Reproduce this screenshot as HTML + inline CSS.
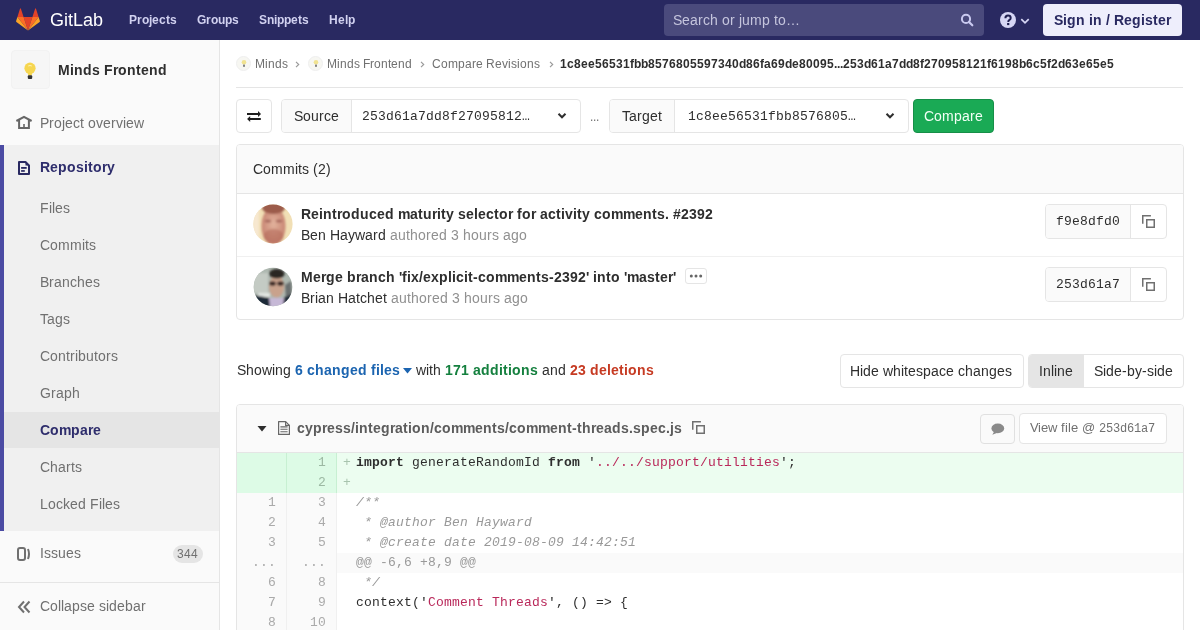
<!DOCTYPE html>
<html><head><meta charset="utf-8">
<style>
*{box-sizing:border-box;margin:0;padding:0}
html,body{width:1200px;height:630px;overflow:hidden;background:#fff;font-family:"Liberation Sans",sans-serif;font-size:14px;color:#2e2e2e}
.abs{position:absolute}
.t{position:absolute;white-space:nowrap;line-height:1;will-change:transform}
c{display:inline-block}
.w3{width:3px}.w4{width:4px}.w5{width:5px}.w6{width:6px}.w7{width:7px}.w8{width:8px}.w9{width:9px}.w10{width:10px}.w11{width:11px}.w12{width:12px}.w13{width:13px}.w14{width:14px}
</style></head><body>
<div class="abs" style="left:0px;top:0px;width:1200px;height:40px;background:#292961"></div>
<svg class="abs" style="left:16px;top:8px" width="24" height="24" viewBox="0 0 24 24">
<path d="M12 22.5 L16.4 9 H7.6 Z" fill="#e24329"/>
<path d="M12 22.5 L7.6 9 H1.4 Z" fill="#fc6d26"/>
<path d="M1.4 9 L0.1 13 a0.9 .9 0 0 0 .3 1 L12 22.5 Z" fill="#fca326"/>
<path d="M1.4 9 H7.6 L4.9 .8 a.45 .45 0 0 0 -.9 0 Z" fill="#e24329"/>
<path d="M12 22.5 L16.4 9 H22.6 Z" fill="#fc6d26"/>
<path d="M22.6 9 L23.9 13 a.9 .9 0 0 1 -.3 1 L12 22.5 Z" fill="#fca326"/>
<path d="M22.6 9 H16.4 L19.1 .8 a.45 .45 0 0 1 .9 0 Z" fill="#e24329"/>
</svg>
<div class="t" style="left:49.5px;top:10.76px;font-size:18px;color:#fff;"><c class="w14">G</c><c class="w4">i</c><c class="w5">t</c><c class="w10">L</c><c class="w10">a</c><c class="w10">b</c></div>
<div class="t" style="left:129px;top:14.14px;font-size:12px;color:#d1d1f0;font-weight:bold;"><c class="w8">P</c><c class="w5">r</c><c class="w7">o</c><c class="w3">j</c><c class="w7">e</c><c class="w7">c</c><c class="w4">t</c><c class="w7">s</c></div>
<div class="t" style="left:197px;top:14.14px;font-size:12px;color:#d1d1f0;font-weight:bold;"><c class="w9">G</c><c class="w5">r</c><c class="w7">o</c><c class="w7">u</c><c class="w7">p</c><c class="w7">s</c></div>
<div class="t" style="left:259px;top:14.14px;font-size:12px;color:#d1d1f0;font-weight:bold;"><c class="w8">S</c><c class="w7">n</c><c class="w3">i</c><c class="w7">p</c><c class="w7">p</c><c class="w7">e</c><c class="w4">t</c><c class="w7">s</c></div>
<div class="t" style="left:329px;top:14.14px;font-size:12px;color:#d1d1f0;font-weight:bold;"><c class="w9">H</c><c class="w7">e</c><c class="w3">l</c><c class="w7">p</c></div>
<div class="abs" style="left:664px;top:4px;width:320px;height:32px;background:#4a4a7c;border-radius:4px"></div>
<div class="t" style="left:673.3px;top:13.15px;font-size:14px;color:#c5c5dd;"><c class="w9">S</c><c class="w8">e</c><c class="w8">a</c><c class="w5">r</c><c class="w7">c</c><c class="w8">h</c><c class="w4">&nbsp;</c><c class="w8">o</c><c class="w5">r</c><c class="w4">&nbsp;</c><c class="w3">j</c><c class="w8">u</c><c class="w12">m</c><c class="w8">p</c><c class="w4">&nbsp;</c><c class="w4">t</c><c class="w8">o</c><c class="w14">…</c></div>
<svg class="abs" style="left:958px;top:11px" width="18" height="18" viewBox="0 0 18 18"><circle cx="8" cy="7.9" r="4.1" fill="none" stroke="#cacaf0" stroke-width="2"/><path d="M11 11 L14.3 14.3" stroke="#cacaf0" stroke-width="2.2" stroke-linecap="round"/></svg>
<svg class="abs" style="left:1000px;top:12px;will-change:transform" width="16" height="16" viewBox="0 0 16 16"><circle cx="8" cy="8" r="8" fill="#d6d6f5"/><path d="M5.4 6.3 Q5.4 3.6 8 3.6 Q10.7 3.6 10.7 6 Q10.7 7.4 9.2 8.1 Q8.3 8.6 8.3 9.9" fill="none" stroke="#1f1f50" stroke-width="2"/><rect x="7.1" y="11" width="2.2" height="2.1" fill="#1f1f50"/></svg>
<svg class="abs" style="left:1020px;top:16.5px" width="10" height="8" viewBox="0 0 10 8"><path d="M1.3 2.2 L5 5.9 L8.7 2.2" fill="none" stroke="#d6d6f5" stroke-width="1.7"/></svg>
<div class="abs" style="left:1043px;top:4px;width:139px;height:32px;background:#eeeefc;border-radius:4px"></div>
<div class="t" style="left:1054px;top:13.15px;font-size:14px;color:#292961;font-weight:bold;"><c class="w9">S</c><c class="w4">i</c><c class="w9">g</c><c class="w9">n</c><c class="w4">&nbsp;</c><c class="w4">i</c><c class="w9">n</c><c class="w4">&nbsp;</c><c class="w4">/</c><c class="w4">&nbsp;</c><c class="w10">R</c><c class="w8">e</c><c class="w9">g</c><c class="w4">i</c><c class="w8">s</c><c class="w5">t</c><c class="w8">e</c><c class="w5">r</c></div>
<div class="abs" style="left:0px;top:40px;width:220px;height:590px;background:#fafafa;border-right:1px solid #e5e5e5"></div>
<div class="abs" style="left:11px;top:50px;width:39px;height:39px;background:#f6f6f6;border:1px solid #f2f2f2;border-radius:4px"></div>
<svg class="abs" style="left:23px;top:62px" width="14" height="19" viewBox="0 0 14 19"><circle cx="7" cy="6.2" r="5.6" fill="#f6d650"/><path d="M3.8 9.5 Q5.2 11.5 5.2 13.5 H8.8 Q8.8 11.5 10.2 9.5 Z" fill="#f6d650"/><rect x="4.8" y="13.2" width="4.4" height="3.8" rx="1" fill="#333"/><path d="M5.2 4 Q7 3 8.8 4" stroke="#fff3b0" stroke-width="1" fill="none"/></svg>
<div class="t" style="left:58px;top:63.45px;font-size:14px;color:#2e2e2e;font-weight:bold;"><c class="w12">M</c><c class="w4">i</c><c class="w9">n</c><c class="w9">d</c><c class="w8">s</c><c class="w4">&nbsp;</c><c class="w9">F</c><c class="w5">r</c><c class="w9">o</c><c class="w9">n</c><c class="w5">t</c><c class="w8">e</c><c class="w9">n</c><c class="w9">d</c></div>
<svg class="abs" style="left:12px;top:110px" width="24" height="24" viewBox="0 0 24 24"><path d="M4.4 11 L12 6.9 L19.6 11" fill="none" stroke="#666" stroke-width="2"/><path d="M7.1 9.6 V17.9 H16.9 V9.6" fill="none" stroke="#666" stroke-width="2"/><rect x="11.2" y="14" width="1.6" height="4" fill="#666"/></svg>
<div class="t" style="left:40px;top:115.75px;font-size:14px;color:#707070;"><c class="w9">P</c><c class="w5">r</c><c class="w8">o</c><c class="w3">j</c><c class="w8">e</c><c class="w7">c</c><c class="w4">t</c><c class="w4">&nbsp;</c><c class="w8">o</c><c class="w7">v</c><c class="w8">e</c><c class="w5">r</c><c class="w7">v</c><c class="w3">i</c><c class="w8">e</c><c class="w10">w</c></div>
<div class="abs" style="left:0px;top:145px;width:219px;height:386px;background:#f0f0f0"></div>
<div class="abs" style="left:0px;top:145px;width:4px;height:386px;background:#4b4ba3"></div>
<svg class="abs" style="left:18px;top:161px" width="12" height="14" viewBox="0 0 12 14"><path d="M1 1 H7.5 L11 4.5 V13 H1 Z" fill="none" stroke="#292961" stroke-width="2" stroke-linejoin="round"/><path d="M7.5 1 L11 4.5 H7.5 Z" fill="#292961"/><rect x="3.1" y="6" width="5.6" height="1.8" fill="#292961"/><rect x="3.1" y="9.1" width="3.7" height="1.7" fill="#292961"/></svg>
<div class="t" style="left:40px;top:160.15px;font-size:14px;color:#2e2d6c;font-weight:bold;"><c class="w10">R</c><c class="w8">e</c><c class="w9">p</c><c class="w9">o</c><c class="w8">s</c><c class="w4">i</c><c class="w5">t</c><c class="w9">o</c><c class="w5">r</c><c class="w8">y</c></div>
<div class="t" style="left:40px;top:201.15px;font-size:14px;color:#707070;"><c class="w9">F</c><c class="w3">i</c><c class="w3">l</c><c class="w8">e</c><c class="w7">s</c></div>
<div class="t" style="left:40px;top:238.15px;font-size:14px;color:#707070;"><c class="w10">C</c><c class="w8">o</c><c class="w12">m</c><c class="w12">m</c><c class="w3">i</c><c class="w4">t</c><c class="w7">s</c></div>
<div class="t" style="left:40px;top:275.15px;font-size:14px;color:#707070;"><c class="w9">B</c><c class="w5">r</c><c class="w8">a</c><c class="w8">n</c><c class="w7">c</c><c class="w8">h</c><c class="w8">e</c><c class="w7">s</c></div>
<div class="t" style="left:40px;top:312.15px;font-size:14px;color:#707070;"><c class="w7">T</c><c class="w8">a</c><c class="w8">g</c><c class="w7">s</c></div>
<div class="t" style="left:40px;top:349.15px;font-size:14px;color:#707070;"><c class="w10">C</c><c class="w8">o</c><c class="w8">n</c><c class="w4">t</c><c class="w5">r</c><c class="w3">i</c><c class="w8">b</c><c class="w8">u</c><c class="w4">t</c><c class="w8">o</c><c class="w5">r</c><c class="w7">s</c></div>
<div class="t" style="left:40px;top:386.15px;font-size:14px;color:#707070;"><c class="w11">G</c><c class="w5">r</c><c class="w8">a</c><c class="w8">p</c><c class="w8">h</c></div>
<div class="abs" style="left:4px;top:412px;width:215px;height:36px;background:#e5e5e5"></div>
<div class="t" style="left:40px;top:423.15px;font-size:14px;color:#2e2d6c;font-weight:bold;"><c class="w10">C</c><c class="w9">o</c><c class="w12">m</c><c class="w9">p</c><c class="w8">a</c><c class="w5">r</c><c class="w8">e</c></div>
<div class="t" style="left:40px;top:460.15px;font-size:14px;color:#707070;"><c class="w10">C</c><c class="w8">h</c><c class="w8">a</c><c class="w5">r</c><c class="w4">t</c><c class="w7">s</c></div>
<div class="t" style="left:40px;top:497.15px;font-size:14px;color:#707070;"><c class="w8">L</c><c class="w8">o</c><c class="w7">c</c><c class="w7">k</c><c class="w8">e</c><c class="w8">d</c><c class="w4">&nbsp;</c><c class="w9">F</c><c class="w3">i</c><c class="w3">l</c><c class="w8">e</c><c class="w7">s</c></div>
<svg class="abs" style="left:17px;top:547px" width="14" height="14" viewBox="0 0 14 14"><rect x="1" y="1" width="7" height="12" rx="2" fill="none" stroke="#707070" stroke-width="2"/><path d="M11 2 Q13 7 11 12" fill="none" stroke="#707070" stroke-width="2"/></svg>
<div class="t" style="left:40px;top:545.75px;font-size:14px;color:#707070;"><c class="w4">I</c><c class="w7">s</c><c class="w7">s</c><c class="w8">u</c><c class="w8">e</c><c class="w7">s</c></div>
<div class="abs" style="left:172.5px;top:545px;width:30px;height:18px;background:#e5e5e5;border-radius:9px"></div>
<div class="t" style="left:177px;top:547.64px;font-size:12px;color:#707070;"><c class="w7">3</c><c class="w7">4</c><c class="w7">4</c></div>
<div class="abs" style="left:0px;top:582px;width:219px;height:1px;background:#e5e5e5"></div>
<svg class="abs" style="left:17px;top:600px" width="14" height="14" viewBox="0 0 14 14"><path d="M7 1.5 L2 7 L7 12.5 M12.5 1.5 L7.5 7 L12.5 12.5" fill="none" stroke="#707070" stroke-width="2"/></svg>
<div class="t" style="left:40px;top:598.95px;font-size:14px;color:#707070;"><c class="w10">C</c><c class="w8">o</c><c class="w3">l</c><c class="w3">l</c><c class="w8">a</c><c class="w8">p</c><c class="w7">s</c><c class="w8">e</c><c class="w4">&nbsp;</c><c class="w7">s</c><c class="w3">i</c><c class="w8">d</c><c class="w8">e</c><c class="w8">b</c><c class="w8">a</c><c class="w5">r</c></div>
<div class="abs" style="left:236px;top:56px;width:15px;height:15px;background:#f7f7f2;border-radius:50%;border:1px solid #efefef"></div>
<svg class="abs" style="left:241px;top:59px" width="6" height="9" viewBox="0 0 6 9"><circle cx="3" cy="3.2" r="2.3" fill="#f1e390"/><rect x="2.1" y="5.6" width="1.8" height="2.2" fill="#777"/></svg>
<div class="t" style="left:255.3px;top:57.64px;font-size:12px;color:#707070;"><c class="w10">M</c><c class="w3">i</c><c class="w7">n</c><c class="w7">d</c><c class="w6">s</c></div>
<svg class="abs" style="left:295px;top:61px" width="6" height="7" viewBox="0 0 6 7"><path d="M1 0.9 L3.7 3.5 L1 6.1" fill="none" stroke="#999" stroke-width="1.15"/></svg>
<div class="abs" style="left:308px;top:56px;width:15px;height:15px;background:#f7f7f2;border-radius:50%;border:1px solid #efefef"></div>
<svg class="abs" style="left:313px;top:59px" width="6" height="9" viewBox="0 0 6 9"><circle cx="3" cy="3.2" r="2.3" fill="#f1e390"/><rect x="2.1" y="5.6" width="1.8" height="2.2" fill="#777"/></svg>
<div class="t" style="left:326.6px;top:57.64px;font-size:12px;color:#707070;"><c class="w10">M</c><c class="w3">i</c><c class="w7">n</c><c class="w7">d</c><c class="w6">s</c><c class="w3">&nbsp;</c><c class="w7">F</c><c class="w4">r</c><c class="w7">o</c><c class="w7">n</c><c class="w3">t</c><c class="w7">e</c><c class="w7">n</c><c class="w7">d</c></div>
<svg class="abs" style="left:420px;top:61px" width="6" height="7" viewBox="0 0 6 7"><path d="M1 0.9 L3.7 3.5 L1 6.1" fill="none" stroke="#999" stroke-width="1.15"/></svg>
<div class="t" style="left:432.3px;top:57.64px;font-size:12px;color:#707070;"><c class="w9">C</c><c class="w7">o</c><c class="w10">m</c><c class="w7">p</c><c class="w7">a</c><c class="w4">r</c><c class="w7">e</c><c class="w3">&nbsp;</c><c class="w9">R</c><c class="w7">e</c><c class="w6">v</c><c class="w3">i</c><c class="w6">s</c><c class="w3">i</c><c class="w7">o</c><c class="w7">n</c><c class="w6">s</c></div>
<svg class="abs" style="left:549px;top:61px" width="6" height="7" viewBox="0 0 6 7"><path d="M1 0.9 L3.7 3.5 L1 6.1" fill="none" stroke="#999" stroke-width="1.15"/></svg>
<div class="t" style="left:560px;top:57.64px;font-size:12px;color:#2e2e2e;font-weight:bold;"><c class="w7">1</c><c class="w7">c</c><c class="w7">8</c><c class="w7">e</c><c class="w7">e</c><c class="w7">5</c><c class="w7">6</c><c class="w7">5</c><c class="w7">3</c><c class="w7">1</c><c class="w4">f</c><c class="w7">b</c><c class="w7">b</c><c class="w7">8</c><c class="w7">5</c><c class="w7">7</c><c class="w7">6</c><c class="w7">8</c><c class="w7">0</c><c class="w7">5</c><c class="w7">5</c><c class="w7">9</c><c class="w7">7</c><c class="w7">3</c><c class="w7">4</c><c class="w7">0</c><c class="w7">d</c><c class="w7">8</c><c class="w7">6</c><c class="w4">f</c><c class="w7">a</c><c class="w7">6</c><c class="w7">9</c><c class="w7">d</c><c class="w7">e</c><c class="w7">8</c><c class="w7">0</c><c class="w7">0</c><c class="w7">9</c><c class="w7">5</c><c class="w3">.</c><c class="w3">.</c><c class="w3">.</c><c class="w7">2</c><c class="w7">5</c><c class="w7">3</c><c class="w7">d</c><c class="w7">6</c><c class="w7">1</c><c class="w7">a</c><c class="w7">7</c><c class="w7">d</c><c class="w7">d</c><c class="w7">8</c><c class="w4">f</c><c class="w7">2</c><c class="w7">7</c><c class="w7">0</c><c class="w7">9</c><c class="w7">5</c><c class="w7">8</c><c class="w7">1</c><c class="w7">2</c><c class="w7">1</c><c class="w4">f</c><c class="w7">6</c><c class="w7">1</c><c class="w7">9</c><c class="w7">8</c><c class="w7">b</c><c class="w7">6</c><c class="w7">c</c><c class="w7">5</c><c class="w4">f</c><c class="w7">2</c><c class="w7">d</c><c class="w7">6</c><c class="w7">3</c><c class="w7">e</c><c class="w7">6</c><c class="w7">5</c><c class="w7">e</c><c class="w7">5</c></div>
<div class="abs" style="left:236px;top:87px;width:947px;height:1px;background:#e5e5e5"></div>
<div class="abs" style="left:236px;top:99px;width:36px;height:34px;background:#fff;border:1px solid #e5e5e5;border-radius:4px"></div>
<svg class="abs" style="left:240px;top:104px" width="28" height="24" viewBox="0 0 28 24"><rect x="7" y="9" width="11.5" height="2" fill="#1e1e1e"/><path d="M18 7 L21 10 L18 13 Z" fill="#1e1e1e"/><rect x="9.8" y="14" width="11" height="2" fill="#1e1e1e"/><path d="M10.2 12 L7.1 15 L10.2 18 Z" fill="#1e1e1e"/></svg>
<div class="abs" style="left:281px;top:99px;width:300px;height:34px;background:#fff;border:1px solid #e5e5e5;border-radius:4px"></div>
<div class="abs" style="left:282px;top:100px;width:70px;height:32px;background:#fafafa;border-right:1px solid #e5e5e5;border-radius:3px 0 0 3px"></div>
<div class="t" style="left:293.9px;top:109.15px;font-size:14px;color:#2e2e2e;"><c class="w9">S</c><c class="w8">o</c><c class="w8">u</c><c class="w5">r</c><c class="w7">c</c><c class="w8">e</c></div>
<div class="t" style="left:362.3px;top:110.44px;font-size:13px;color:#2e2e2e;font-family:'Liberation Mono',monospace;"><c class="w8">2</c><c class="w8">5</c><c class="w8">3</c><c class="w8">d</c><c class="w8">6</c><c class="w8">1</c><c class="w8">a</c><c class="w8">7</c><c class="w8">d</c><c class="w8">d</c><c class="w8">8</c><c class="w8">f</c><c class="w8">2</c><c class="w8">7</c><c class="w8">0</c><c class="w8">9</c><c class="w8">5</c><c class="w8">8</c><c class="w8">1</c><c class="w8">2</c><c class="w8">…</c></div>
<svg class="abs" style="left:557px;top:112px" width="10" height="8" viewBox="0 0 10 8"><path d="M1.5 1.8 L5 5.3 L8.5 1.8" fill="none" stroke="#2e2e2e" stroke-width="2"/></svg>
<div class="t" style="left:589.5px;top:110.84px;font-size:12px;color:#707070;"><c class="w3">.</c><c class="w3">.</c><c class="w3">.</c></div>
<div class="abs" style="left:609px;top:99px;width:300px;height:34px;background:#fff;border:1px solid #e5e5e5;border-radius:4px"></div>
<div class="abs" style="left:610px;top:100px;width:65px;height:32px;background:#fafafa;border-right:1px solid #e5e5e5;border-radius:3px 0 0 3px"></div>
<div class="t" style="left:621.5px;top:109.15px;font-size:14px;color:#2e2e2e;"><c class="w7">T</c><c class="w8">a</c><c class="w5">r</c><c class="w8">g</c><c class="w8">e</c><c class="w4">t</c></div>
<div class="t" style="left:688.2px;top:110.44px;font-size:13px;color:#2e2e2e;font-family:'Liberation Mono',monospace;"><c class="w8">1</c><c class="w8">c</c><c class="w8">8</c><c class="w8">e</c><c class="w8">e</c><c class="w8">5</c><c class="w8">6</c><c class="w8">5</c><c class="w8">3</c><c class="w8">1</c><c class="w8">f</c><c class="w8">b</c><c class="w8">b</c><c class="w8">8</c><c class="w8">5</c><c class="w8">7</c><c class="w8">6</c><c class="w8">8</c><c class="w8">0</c><c class="w8">5</c><c class="w8">…</c></div>
<svg class="abs" style="left:885px;top:112px" width="10" height="8" viewBox="0 0 10 8"><path d="M1.5 1.8 L5 5.3 L8.5 1.8" fill="none" stroke="#2e2e2e" stroke-width="2"/></svg>
<div class="abs" style="left:913px;top:99px;width:81px;height:34px;background:#1aaa55;border:1px solid #168f48;border-radius:4px"></div>
<div class="t" style="left:924.2px;top:109.15px;font-size:14px;color:#f2fff6;"><c class="w10">C</c><c class="w8">o</c><c class="w12">m</c><c class="w8">p</c><c class="w8">a</c><c class="w5">r</c><c class="w8">e</c></div>
<div class="abs" style="left:236px;top:144px;width:948px;height:176px;background:#fff;border:1px solid #e5e5e5;border-radius:4px"></div>
<div class="abs" style="left:237px;top:145px;width:946px;height:49px;background:#fafafa;border-bottom:1px solid #e5e5e5;border-radius:3px 3px 0 0"></div>
<div class="t" style="left:253.4px;top:162.45px;font-size:14px;color:#2e2e2e;"><c class="w10">C</c><c class="w8">o</c><c class="w12">m</c><c class="w12">m</c><c class="w3">i</c><c class="w4">t</c><c class="w7">s</c><c class="w4">&nbsp;</c><c class="w5">(</c><c class="w8">2</c><c class="w5">)</c></div>
<div class="abs" style="left:237px;top:256px;width:946px;height:1px;background:#f0f0f0"></div>
<svg class="abs" style="left:253px;top:204px" width="40" height="40" viewBox="0 0 40 40">
<defs><clipPath id="c1"><circle cx="20" cy="20" r="19.6"/></clipPath><filter id="bl1" x="-10%" y="-10%" width="120%" height="120%"><feGaussianBlur stdDeviation="1.1"/></filter>
<radialGradient id="fg1" cx="50%" cy="45%" r="55%"><stop offset="0" stop-color="#e2b29c"/><stop offset="1" stop-color="#c68270"/></radialGradient></defs>
<g clip-path="url(#c1)"><rect width="40" height="40" fill="#f1dfb5"/>
<g filter="url(#bl1)">
<rect x="0" y="0" width="6" height="40" fill="#f7e8d0"/>
<ellipse cx="20.5" cy="22" rx="12" ry="19" fill="url(#fg1)"/>
<ellipse cx="20.5" cy="4" rx="11.5" ry="6" fill="#9c5c4c"/>
<ellipse cx="15" cy="17" rx="3.2" ry="1.6" fill="#9a5a50" opacity=".75"/>
<ellipse cx="26" cy="17" rx="3.2" ry="1.6" fill="#9a5a50" opacity=".75"/>
<ellipse cx="20.5" cy="32" rx="10" ry="7" fill="#b06454" opacity=".5"/>
</g></g></svg>
<svg class="abs" style="left:253px;top:267px" width="40" height="40" viewBox="0 0 40 40">
<defs><clipPath id="c2"><circle cx="20" cy="20" r="19.3"/></clipPath><filter id="bl2" x="-10%" y="-10%" width="120%" height="120%"><feGaussianBlur stdDeviation="0.8"/></filter></defs>
<g clip-path="url(#c2)"><rect width="40" height="40" fill="#aeb8b0"/>
<g filter="url(#bl2)">
<rect x="0" y="6" width="15" height="20" fill="#c4cbc4"/>
<rect x="5" y="26" width="12" height="4" fill="#e2e6e2"/>
<path d="M32 18 L38 14 L39 30 L33 32 Z" fill="#6a7070"/>
<path d="M1 28 L17 31 L17 40 L1 40 Z" fill="#1f2a38"/>
<path d="M30 31 L39 27 L40 40 L30 40 Z" fill="#27313c"/>
<ellipse cx="23.5" cy="19.5" rx="7.6" ry="11" fill="#c9a28c"/>
<ellipse cx="23.8" cy="6.8" rx="7.8" ry="4.8" fill="#2a2624"/>
<ellipse cx="19.6" cy="16.6" rx="3.3" ry="2.3" fill="#3e2c28"/>
<ellipse cx="27.4" cy="16.6" rx="3.3" ry="2.3" fill="#3e2c28"/>
<path d="M16 31 L31 31 L30 40 L17 40 Z" fill="#c6b8d6"/>
</g></g></svg>
<div class="t" style="left:301.4px;top:206.85px;font-size:14px;color:#2e2e2e;font-weight:bold;"><c class="w10">R</c><c class="w8">e</c><c class="w4">i</c><c class="w9">n</c><c class="w5">t</c><c class="w5">r</c><c class="w9">o</c><c class="w9">d</c><c class="w9">u</c><c class="w8">c</c><c class="w8">e</c><c class="w9">d</c><c class="w4">&nbsp;</c><c class="w12">m</c><c class="w8">a</c><c class="w5">t</c><c class="w9">u</c><c class="w5">r</c><c class="w4">i</c><c class="w5">t</c><c class="w8">y</c><c class="w4">&nbsp;</c><c class="w8">s</c><c class="w8">e</c><c class="w4">l</c><c class="w8">e</c><c class="w8">c</c><c class="w5">t</c><c class="w9">o</c><c class="w5">r</c><c class="w4">&nbsp;</c><c class="w5">f</c><c class="w9">o</c><c class="w5">r</c><c class="w4">&nbsp;</c><c class="w8">a</c><c class="w8">c</c><c class="w5">t</c><c class="w4">i</c><c class="w8">v</c><c class="w4">i</c><c class="w5">t</c><c class="w8">y</c><c class="w4">&nbsp;</c><c class="w8">c</c><c class="w9">o</c><c class="w12">m</c><c class="w12">m</c><c class="w8">e</c><c class="w9">n</c><c class="w5">t</c><c class="w8">s</c><c class="w4">.</c><c class="w4">&nbsp;</c><c class="w8">#</c><c class="w8">2</c><c class="w8">3</c><c class="w8">9</c><c class="w8">2</c></div>
<div class="t" style="left:301.4px;top:228.15px;font-size:14px;color:#2e2e2e;"><c class="w9">B</c><c class="w8">e</c><c class="w8">n</c><c class="w4">&nbsp;</c><c class="w10">H</c><c class="w8">a</c><c class="w7">y</c><c class="w10">w</c><c class="w8">a</c><c class="w5">r</c><c class="w8">d</c><c class="w4">&nbsp;</c><span style="color:#909090;"><c class="w8">a</c><c class="w8">u</c><c class="w4">t</c><c class="w8">h</c><c class="w8">o</c><c class="w5">r</c><c class="w8">e</c><c class="w8">d</c><c class="w4">&nbsp;</c><c class="w8">3</c><c class="w4">&nbsp;</c><c class="w8">h</c><c class="w8">o</c><c class="w8">u</c><c class="w5">r</c><c class="w7">s</c><c class="w4">&nbsp;</c><c class="w8">a</c><c class="w8">g</c><c class="w8">o</c></span></div>
<div class="t" style="left:301.4px;top:269.85px;font-size:14px;color:#2e2e2e;font-weight:bold;"><c class="w12">M</c><c class="w8">e</c><c class="w5">r</c><c class="w9">g</c><c class="w8">e</c><c class="w4">&nbsp;</c><c class="w9">b</c><c class="w5">r</c><c class="w8">a</c><c class="w9">n</c><c class="w8">c</c><c class="w9">h</c><c class="w4">&nbsp;</c><c class="w3">&#x27;</c><c class="w5">f</c><c class="w4">i</c><c class="w8">x</c><c class="w4">/</c><c class="w8">e</c><c class="w8">x</c><c class="w9">p</c><c class="w4">l</c><c class="w4">i</c><c class="w8">c</c><c class="w4">i</c><c class="w5">t</c><c class="w5">-</c><c class="w8">c</c><c class="w9">o</c><c class="w12">m</c><c class="w12">m</c><c class="w8">e</c><c class="w9">n</c><c class="w5">t</c><c class="w8">s</c><c class="w5">-</c><c class="w8">2</c><c class="w8">3</c><c class="w8">9</c><c class="w8">2</c><c class="w3">&#x27;</c><c class="w4">&nbsp;</c><c class="w4">i</c><c class="w9">n</c><c class="w5">t</c><c class="w9">o</c><c class="w4">&nbsp;</c><c class="w3">&#x27;</c><c class="w12">m</c><c class="w8">a</c><c class="w8">s</c><c class="w5">t</c><c class="w8">e</c><c class="w5">r</c><c class="w3">&#x27;</c></div>
<div class="abs" style="left:685px;top:268px;width:22px;height:16px;background:#fff;border:1px solid #e5e5e5;border-radius:3px"></div>
<svg class="abs" style="left:689px;top:274px" width="14" height="4" viewBox="0 0 14 4"><circle cx="2.3" cy="2" r="1.5" fill="#666"/><circle cx="7" cy="2" r="1.5" fill="#666"/><circle cx="11.7" cy="2" r="1.5" fill="#666"/></svg>
<div class="t" style="left:301.4px;top:291.15px;font-size:14px;color:#2e2e2e;"><c class="w9">B</c><c class="w5">r</c><c class="w3">i</c><c class="w8">a</c><c class="w8">n</c><c class="w4">&nbsp;</c><c class="w10">H</c><c class="w8">a</c><c class="w4">t</c><c class="w7">c</c><c class="w8">h</c><c class="w8">e</c><c class="w4">t</c><c class="w4">&nbsp;</c><span style="color:#909090;"><c class="w8">a</c><c class="w8">u</c><c class="w4">t</c><c class="w8">h</c><c class="w8">o</c><c class="w5">r</c><c class="w8">e</c><c class="w8">d</c><c class="w4">&nbsp;</c><c class="w8">3</c><c class="w4">&nbsp;</c><c class="w8">h</c><c class="w8">o</c><c class="w8">u</c><c class="w5">r</c><c class="w7">s</c><c class="w4">&nbsp;</c><c class="w8">a</c><c class="w8">g</c><c class="w8">o</c></span></div>
<div class="abs" style="left:1045px;top:204px;width:122px;height:35px;background:#fff;border:1px solid #e5e5e5;border-radius:4px"></div>
<div class="abs" style="left:1046px;top:205px;width:85px;height:33px;background:#fafafa;border-right:1px solid #e5e5e5;border-radius:3px 0 0 3px"></div>
<div class="t" style="left:1056px;top:215.04px;font-size:13px;color:#2e2e2e;font-family:'Liberation Mono',monospace;"><c class="w8">f</c><c class="w8">9</c><c class="w8">e</c><c class="w8">8</c><c class="w8">d</c><c class="w8">f</c><c class="w8">d</c><c class="w8">0</c></div>
<svg class="abs" style="left:1142px;top:215px" width="14" height="14" viewBox="0 0 14 14"><path d="M0.75 8.7 V0.75 H8.9" fill="none" stroke="#707070" stroke-width="1.5"/><rect x="4.75" y="4.75" width="7.5" height="7.5" fill="none" stroke="#707070" stroke-width="1.5"/></svg>
<div class="abs" style="left:1045px;top:267px;width:122px;height:35px;background:#fff;border:1px solid #e5e5e5;border-radius:4px"></div>
<div class="abs" style="left:1046px;top:268px;width:85px;height:33px;background:#fafafa;border-right:1px solid #e5e5e5;border-radius:3px 0 0 3px"></div>
<div class="t" style="left:1056px;top:278.04px;font-size:13px;color:#2e2e2e;font-family:'Liberation Mono',monospace;"><c class="w8">2</c><c class="w8">5</c><c class="w8">3</c><c class="w8">d</c><c class="w8">6</c><c class="w8">1</c><c class="w8">a</c><c class="w8">7</c></div>
<svg class="abs" style="left:1142px;top:278px" width="14" height="14" viewBox="0 0 14 14"><path d="M0.75 8.7 V0.75 H8.9" fill="none" stroke="#707070" stroke-width="1.5"/><rect x="4.75" y="4.75" width="7.5" height="7.5" fill="none" stroke="#707070" stroke-width="1.5"/></svg>
<div class="t" style="left:236.5px;top:362.95px;font-size:14px;color:#2e2e2e;"><c class="w9">S</c><c class="w8">h</c><c class="w8">o</c><c class="w10">w</c><c class="w3">i</c><c class="w8">n</c><c class="w8">g</c><c class="w4">&nbsp;</c><span style="font-weight:bold;color:#1b64b0;"><c class="w8">6</c><c class="w4">&nbsp;</c><c class="w8">c</c><c class="w9">h</c><c class="w8">a</c><c class="w9">n</c><c class="w9">g</c><c class="w8">e</c><c class="w9">d</c><c class="w4">&nbsp;</c><c class="w5">f</c><c class="w4">i</c><c class="w4">l</c><c class="w8">e</c><c class="w8">s</c></span></div>
<svg class="abs" style="left:403.3px;top:368px" width="9" height="6" viewBox="0 0 9 6"><path d="M0 0 H9 L4.5 5.5 Z" fill="#1b64b0"/></svg>
<div class="t" style="left:416.2px;top:362.95px;font-size:14px;color:#2e2e2e;"><c class="w10">w</c><c class="w3">i</c><c class="w4">t</c><c class="w8">h</c><c class="w4">&nbsp;</c><span style="font-weight:bold;color:#15803f;"><c class="w8">1</c><c class="w8">7</c><c class="w8">1</c><c class="w4">&nbsp;</c><c class="w8">a</c><c class="w9">d</c><c class="w9">d</c><c class="w4">i</c><c class="w5">t</c><c class="w4">i</c><c class="w9">o</c><c class="w9">n</c><c class="w8">s</c></span><c class="w4">&nbsp;</c><c class="w8">a</c><c class="w8">n</c><c class="w8">d</c><c class="w4">&nbsp;</c><span style="font-weight:bold;color:#c63a22;"><c class="w8">2</c><c class="w8">3</c><c class="w4">&nbsp;</c><c class="w9">d</c><c class="w8">e</c><c class="w4">l</c><c class="w8">e</c><c class="w5">t</c><c class="w4">i</c><c class="w9">o</c><c class="w9">n</c><c class="w8">s</c></span></div>
<div class="abs" style="left:840px;top:354px;width:184px;height:34px;background:#fff;border:1px solid #e5e5e5;border-radius:4px"></div>
<div class="t" style="left:850.4px;top:364.35px;font-size:14px;color:#2e2e2e;"><c class="w10">H</c><c class="w3">i</c><c class="w8">d</c><c class="w8">e</c><c class="w4">&nbsp;</c><c class="w10">w</c><c class="w8">h</c><c class="w3">i</c><c class="w4">t</c><c class="w8">e</c><c class="w7">s</c><c class="w8">p</c><c class="w8">a</c><c class="w7">c</c><c class="w8">e</c><c class="w4">&nbsp;</c><c class="w7">c</c><c class="w8">h</c><c class="w8">a</c><c class="w8">n</c><c class="w8">g</c><c class="w8">e</c><c class="w7">s</c></div>
<div class="abs" style="left:1028px;top:354px;width:156px;height:34px;background:#fff;border:1px solid #e5e5e5;border-radius:4px"></div>
<div class="abs" style="left:1029px;top:355px;width:55px;height:32px;background:#e5e5e5;border-radius:3px 0 0 3px"></div>
<div class="t" style="left:1038.5px;top:364.35px;font-size:14px;color:#2e2e2e;"><c class="w4">I</c><c class="w8">n</c><c class="w3">l</c><c class="w3">i</c><c class="w8">n</c><c class="w8">e</c></div>
<div class="t" style="left:1093.5px;top:364.35px;font-size:14px;color:#2e2e2e;"><c class="w9">S</c><c class="w3">i</c><c class="w8">d</c><c class="w8">e</c><c class="w5">-</c><c class="w8">b</c><c class="w7">y</c><c class="w5">-</c><c class="w7">s</c><c class="w3">i</c><c class="w8">d</c><c class="w8">e</c></div>
<div class="abs" style="left:236px;top:404px;width:948px;height:240px;background:#fff;border:1px solid #e5e5e5;border-radius:4px"></div>
<div class="abs" style="left:237px;top:405px;width:946px;height:48px;background:#fafafa;border-bottom:1px solid #e5e5e5;border-radius:3px 3px 0 0"></div>
<svg class="abs" style="left:257px;top:425.5px" width="10" height="6" viewBox="0 0 10 6"><path d="M0.5 0 H9.5 L5 5.5 Z" fill="#2e2e2e"/></svg>
<svg class="abs" style="left:277px;top:420px" width="14" height="16" viewBox="0 0 14 16"><path d="M1.6 1.6 H8.6 L12.4 5.4 V14.4 H1.6 Z" fill="none" stroke="#666" stroke-width="1.2" stroke-linejoin="round"/><path d="M8.6 1.6 V5.4 H12.4" fill="none" stroke="#666" stroke-width="1.1"/><path d="M3.4 6.9 H10.6 M3.4 9.3 H10.6 M3.4 11.7 H10.6" stroke="#666" stroke-width="1.1"/></svg>
<div class="t" style="left:297.3px;top:420.65px;font-size:14px;color:#5c5c5c;font-weight:bold;"><c class="w8">c</c><c class="w8">y</c><c class="w9">p</c><c class="w5">r</c><c class="w8">e</c><c class="w8">s</c><c class="w8">s</c><c class="w4">/</c><c class="w4">i</c><c class="w9">n</c><c class="w5">t</c><c class="w8">e</c><c class="w9">g</c><c class="w5">r</c><c class="w8">a</c><c class="w5">t</c><c class="w4">i</c><c class="w9">o</c><c class="w9">n</c><c class="w4">/</c><c class="w8">c</c><c class="w9">o</c><c class="w12">m</c><c class="w12">m</c><c class="w8">e</c><c class="w9">n</c><c class="w5">t</c><c class="w8">s</c><c class="w4">/</c><c class="w8">c</c><c class="w9">o</c><c class="w12">m</c><c class="w12">m</c><c class="w8">e</c><c class="w9">n</c><c class="w5">t</c><c class="w5">-</c><c class="w5">t</c><c class="w9">h</c><c class="w5">r</c><c class="w8">e</c><c class="w8">a</c><c class="w9">d</c><c class="w8">s</c><c class="w4">.</c><c class="w8">s</c><c class="w9">p</c><c class="w8">e</c><c class="w8">c</c><c class="w4">.</c><c class="w4">j</c><c class="w8">s</c></div>
<svg class="abs" style="left:692px;top:421px" width="14" height="14" viewBox="0 0 14 14"><path d="M0.75 8.7 V0.75 H8.9" fill="none" stroke="#707070" stroke-width="1.5"/><rect x="4.75" y="4.75" width="7.5" height="7.5" fill="none" stroke="#707070" stroke-width="1.5"/></svg>
<div class="abs" style="left:980px;top:414px;width:35px;height:29.5px;background:#fafafa;border:1px solid #e0e0e0;border-radius:4px"></div>
<svg class="abs" style="left:991px;top:423px" width="14" height="12" viewBox="0 0 14 12"><ellipse cx="6.8" cy="5.4" rx="6.4" ry="4.8" fill="#8a8a8a"/><path d="M3.2 8.5 L1.3 11.7 L6.5 9.8 Z" fill="#8a8a8a"/></svg>
<div class="abs" style="left:1019px;top:413px;width:148px;height:31px;background:#fff;border:1px solid #e5e5e5;border-radius:4px"></div>
<div class="t" style="left:1030px;top:420.99px;font-size:13px;color:#707070;"><c class="w8">V</c><c class="w3">i</c><c class="w7">e</c><c class="w9">w</c><c class="w4">&nbsp;</c><c class="w4">f</c><c class="w3">i</c><c class="w3">l</c><c class="w7">e</c><c class="w4">&nbsp;</c><c class="w13">@</c></div>
<div class="t" style="left:1099px;top:422.81px;font-size:12px;color:#707070;font-family:'Liberation Mono',monospace;"><c class="w7">2</c><c class="w7">5</c><c class="w7">3</c><c class="w7">d</c><c class="w7">6</c><c class="w7">1</c><c class="w7">a</c><c class="w7">7</c></div>
<div class="abs" style="left:237px;top:453px;width:50px;height:20px;background:#ddfbe6;border-right:1px solid #c7f0d2"></div>
<div class="abs" style="left:287px;top:453px;width:50px;height:20px;background:#ddfbe6;border-right:1px solid #c7f0d2"></div>
<div class="abs" style="left:337px;top:453px;width:846px;height:20px;background:#ecfdf0"></div>
<div class="t" style="left:318.3px;top:456.04px;font-size:13px;color:#9bb8a2;font-family:'Liberation Mono',monospace;"><c class="w8">1</c></div>
<div class="t" style="left:343px;top:456.04px;font-size:13px;color:#a8c4ae;font-family:'Liberation Mono',monospace;"><c class="w8">+</c></div>
<div class="t" style="left:355.9px;top:456.04px;font-size:13px;color:#2e2e2e;font-family:'Liberation Mono',monospace;"><span style="font-weight:bold;"><c class="w8">i</c><c class="w8">m</c><c class="w8">p</c><c class="w8">o</c><c class="w8">r</c><c class="w8">t</c></span><c class="w8">&nbsp;</c><c class="w8">g</c><c class="w8">e</c><c class="w8">n</c><c class="w8">e</c><c class="w8">r</c><c class="w8">a</c><c class="w8">t</c><c class="w8">e</c><c class="w8">R</c><c class="w8">a</c><c class="w8">n</c><c class="w8">d</c><c class="w8">o</c><c class="w8">m</c><c class="w8">I</c><c class="w8">d</c><c class="w8">&nbsp;</c><span style="font-weight:bold;"><c class="w8">f</c><c class="w8">r</c><c class="w8">o</c><c class="w8">m</c></span><c class="w8">&nbsp;</c><c class="w8">&#x27;</c><span style="color:#b9285a;"><c class="w8">.</c><c class="w8">.</c><c class="w8">/</c><c class="w8">.</c><c class="w8">.</c><c class="w8">/</c><c class="w8">s</c><c class="w8">u</c><c class="w8">p</c><c class="w8">p</c><c class="w8">o</c><c class="w8">r</c><c class="w8">t</c><c class="w8">/</c><c class="w8">u</c><c class="w8">t</c><c class="w8">i</c><c class="w8">l</c><c class="w8">i</c><c class="w8">t</c><c class="w8">i</c><c class="w8">e</c><c class="w8">s</c></span><c class="w8">&#x27;</c><c class="w8">;</c></div>
<div class="abs" style="left:237px;top:473px;width:50px;height:20px;background:#ddfbe6;border-right:1px solid #c7f0d2"></div>
<div class="abs" style="left:287px;top:473px;width:50px;height:20px;background:#ddfbe6;border-right:1px solid #c7f0d2"></div>
<div class="abs" style="left:337px;top:473px;width:846px;height:20px;background:#ecfdf0"></div>
<div class="t" style="left:318.3px;top:476.04px;font-size:13px;color:#9bb8a2;font-family:'Liberation Mono',monospace;"><c class="w8">2</c></div>
<div class="t" style="left:343px;top:476.04px;font-size:13px;color:#a8c4ae;font-family:'Liberation Mono',monospace;"><c class="w8">+</c></div>
<div class="abs" style="left:237px;top:493px;width:50px;height:20px;background:#fafafa;border-right:1px solid #f0f0f0"></div>
<div class="abs" style="left:287px;top:493px;width:50px;height:20px;background:#fafafa;border-right:1px solid #f0f0f0"></div>
<div class="t" style="left:268.3px;top:496.04px;font-size:13px;color:#aaa;font-family:'Liberation Mono',monospace;"><c class="w8">1</c></div>
<div class="t" style="left:318.3px;top:496.04px;font-size:13px;color:#aaa;font-family:'Liberation Mono',monospace;"><c class="w8">3</c></div>
<div class="t" style="left:355.9px;top:496.04px;font-size:13px;color:#2e2e2e;font-family:'Liberation Mono',monospace;"><span style="font-style:italic;color:#999;"><c class="w8">/</c><c class="w8">*</c><c class="w8">*</c></span></div>
<div class="abs" style="left:237px;top:513px;width:50px;height:20px;background:#fafafa;border-right:1px solid #f0f0f0"></div>
<div class="abs" style="left:287px;top:513px;width:50px;height:20px;background:#fafafa;border-right:1px solid #f0f0f0"></div>
<div class="t" style="left:268.3px;top:516.04px;font-size:13px;color:#aaa;font-family:'Liberation Mono',monospace;"><c class="w8">2</c></div>
<div class="t" style="left:318.3px;top:516.04px;font-size:13px;color:#aaa;font-family:'Liberation Mono',monospace;"><c class="w8">4</c></div>
<div class="t" style="left:355.9px;top:516.04px;font-size:13px;color:#2e2e2e;font-family:'Liberation Mono',monospace;"><span style="font-style:italic;color:#999;"><c class="w8">&nbsp;</c><c class="w8">*</c><c class="w8">&nbsp;</c><c class="w8">@</c><c class="w8">a</c><c class="w8">u</c><c class="w8">t</c><c class="w8">h</c><c class="w8">o</c><c class="w8">r</c><c class="w8">&nbsp;</c><c class="w8">B</c><c class="w8">e</c><c class="w8">n</c><c class="w8">&nbsp;</c><c class="w8">H</c><c class="w8">a</c><c class="w8">y</c><c class="w8">w</c><c class="w8">a</c><c class="w8">r</c><c class="w8">d</c></span></div>
<div class="abs" style="left:237px;top:533px;width:50px;height:20px;background:#fafafa;border-right:1px solid #f0f0f0"></div>
<div class="abs" style="left:287px;top:533px;width:50px;height:20px;background:#fafafa;border-right:1px solid #f0f0f0"></div>
<div class="t" style="left:268.3px;top:536.04px;font-size:13px;color:#aaa;font-family:'Liberation Mono',monospace;"><c class="w8">3</c></div>
<div class="t" style="left:318.3px;top:536.04px;font-size:13px;color:#aaa;font-family:'Liberation Mono',monospace;"><c class="w8">5</c></div>
<div class="t" style="left:355.9px;top:536.04px;font-size:13px;color:#2e2e2e;font-family:'Liberation Mono',monospace;"><span style="font-style:italic;color:#999;"><c class="w8">&nbsp;</c><c class="w8">*</c><c class="w8">&nbsp;</c><c class="w8">@</c><c class="w8">c</c><c class="w8">r</c><c class="w8">e</c><c class="w8">a</c><c class="w8">t</c><c class="w8">e</c><c class="w8">&nbsp;</c><c class="w8">d</c><c class="w8">a</c><c class="w8">t</c><c class="w8">e</c><c class="w8">&nbsp;</c><c class="w8">2</c><c class="w8">0</c><c class="w8">1</c><c class="w8">9</c><c class="w8">-</c><c class="w8">0</c><c class="w8">8</c><c class="w8">-</c><c class="w8">0</c><c class="w8">9</c><c class="w8">&nbsp;</c><c class="w8">1</c><c class="w8">4</c><c class="w8">:</c><c class="w8">4</c><c class="w8">2</c><c class="w8">:</c><c class="w8">5</c><c class="w8">1</c></span></div>
<div class="abs" style="left:237px;top:553px;width:50px;height:20px;background:#fafafa;border-right:1px solid #f0f0f0"></div>
<div class="abs" style="left:287px;top:553px;width:50px;height:20px;background:#fafafa;border-right:1px solid #f0f0f0"></div>
<div class="abs" style="left:337px;top:553px;width:846px;height:20px;background:#fafafa"></div>
<div class="t" style="left:252.3px;top:556.04px;font-size:13px;color:#aaa;font-family:'Liberation Mono',monospace;"><c class="w8">.</c><c class="w8">.</c><c class="w8">.</c></div>
<div class="t" style="left:302.3px;top:556.04px;font-size:13px;color:#aaa;font-family:'Liberation Mono',monospace;"><c class="w8">.</c><c class="w8">.</c><c class="w8">.</c></div>
<div class="t" style="left:355.9px;top:556.04px;font-size:13px;color:#2e2e2e;font-family:'Liberation Mono',monospace;"><span style="color:#999;"><c class="w8">@</c><c class="w8">@</c><c class="w8">&nbsp;</c><c class="w8">-</c><c class="w8">6</c><c class="w8">,</c><c class="w8">6</c><c class="w8">&nbsp;</c><c class="w8">+</c><c class="w8">8</c><c class="w8">,</c><c class="w8">9</c><c class="w8">&nbsp;</c><c class="w8">@</c><c class="w8">@</c></span></div>
<div class="abs" style="left:237px;top:573px;width:50px;height:20px;background:#fafafa;border-right:1px solid #f0f0f0"></div>
<div class="abs" style="left:287px;top:573px;width:50px;height:20px;background:#fafafa;border-right:1px solid #f0f0f0"></div>
<div class="t" style="left:268.3px;top:576.04px;font-size:13px;color:#aaa;font-family:'Liberation Mono',monospace;"><c class="w8">6</c></div>
<div class="t" style="left:318.3px;top:576.04px;font-size:13px;color:#aaa;font-family:'Liberation Mono',monospace;"><c class="w8">8</c></div>
<div class="t" style="left:355.9px;top:576.04px;font-size:13px;color:#2e2e2e;font-family:'Liberation Mono',monospace;"><span style="font-style:italic;color:#999;"><c class="w8">&nbsp;</c><c class="w8">*</c><c class="w8">/</c></span></div>
<div class="abs" style="left:237px;top:593px;width:50px;height:20px;background:#fafafa;border-right:1px solid #f0f0f0"></div>
<div class="abs" style="left:287px;top:593px;width:50px;height:20px;background:#fafafa;border-right:1px solid #f0f0f0"></div>
<div class="t" style="left:268.3px;top:596.04px;font-size:13px;color:#aaa;font-family:'Liberation Mono',monospace;"><c class="w8">7</c></div>
<div class="t" style="left:318.3px;top:596.04px;font-size:13px;color:#aaa;font-family:'Liberation Mono',monospace;"><c class="w8">9</c></div>
<div class="t" style="left:355.9px;top:596.04px;font-size:13px;color:#2e2e2e;font-family:'Liberation Mono',monospace;"><c class="w8">c</c><c class="w8">o</c><c class="w8">n</c><c class="w8">t</c><c class="w8">e</c><c class="w8">x</c><c class="w8">t</c><c class="w8">(</c><c class="w8">&#x27;</c><span style="color:#b9285a;"><c class="w8">C</c><c class="w8">o</c><c class="w8">m</c><c class="w8">m</c><c class="w8">e</c><c class="w8">n</c><c class="w8">t</c><c class="w8">&nbsp;</c><c class="w8">T</c><c class="w8">h</c><c class="w8">r</c><c class="w8">e</c><c class="w8">a</c><c class="w8">d</c><c class="w8">s</c></span><c class="w8">&#x27;</c><c class="w8">,</c><c class="w8">&nbsp;</c><c class="w8">(</c><c class="w8">)</c><c class="w8">&nbsp;</c><c class="w8">=</c><c class="w8">&gt;</c><c class="w8">&nbsp;</c><c class="w8">{</c></div>
<div class="abs" style="left:237px;top:613px;width:50px;height:20px;background:#fafafa;border-right:1px solid #f0f0f0"></div>
<div class="abs" style="left:287px;top:613px;width:50px;height:20px;background:#fafafa;border-right:1px solid #f0f0f0"></div>
<div class="t" style="left:268.3px;top:616.04px;font-size:13px;color:#aaa;font-family:'Liberation Mono',monospace;"><c class="w8">8</c></div>
<div class="t" style="left:310.3px;top:616.04px;font-size:13px;color:#aaa;font-family:'Liberation Mono',monospace;"><c class="w8">1</c><c class="w8">0</c></div>
</body></html>
